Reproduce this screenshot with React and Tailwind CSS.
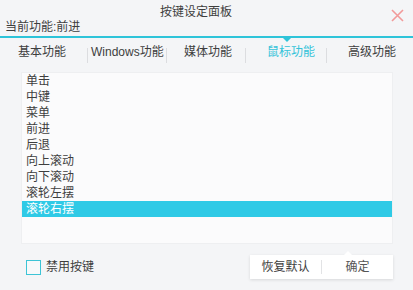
import React from 'react';

const tabs = [
    { label: '基本功能', w: 87, pl: 18 },
    { label: 'Windows功能', w: 79, pl: 4 },
    { label: '媒体功能', w: 79, pl: 18 },
    { label: '鼠标功能', w: 81, pl: 22 },
    { label: '高级功能', w: 87, pl: 22 },
];
const items = ['单击', '中键', '菜单', '前进', '后退', '向上滚动', '向下滚动', '滚轮左摆', '滚轮右摆'];

export default function App() {
    const active = 3;
    const selected = 8;

    return (
        <div
            className="w-[413px] h-[290px] bg-[#f4f5f7] text-[#3e3e3e] text-[12px] leading-none overflow-hidden"
            style={{ fontFamily: '"Liberation Sans", "Noto Sans CJK SC", sans-serif' }}
        >
            {/* Header */}
            <div className="relative h-[36px]">
                <div className="absolute left-[160px] top-[6px]">按键设定面板</div>
                <div className="absolute left-[5px] top-[21px]">当前功能:前进</div>
                <svg className="absolute left-[391px] top-[9px]" width="13" height="13" viewBox="0 0 13 13">
                    <path d="M1 1 L12 12 M12 1 L1 12" stroke="#f29a9a" strokeWidth="1.6" />
                </svg>
            </div>

            {/* Tabs */}
            <div className="relative h-[28px] border-t-2 border-[#2ec4d9] flex">
                {tabs.map((t, i) => (
                    <div key={t.label} className="relative flex items-center" style={{ width: t.w, paddingLeft: t.pl }}>
                        {i > 0 && <div className="absolute left-0 top-[10px] w-px h-[15px] bg-[#dcdde0]" />}
                        <span className={i === active ? 'text-[#35c3d9] pt-[2px]' : 'pt-[2px]'}>{t.label}</span>
                        {i === active && (
                            <div className="absolute left-[38px] top-0 w-0 h-0 border-l-[4px] border-r-[4px] border-t-[4px] border-l-transparent border-r-transparent border-t-[#2ec4d9]" />
                        )}
                    </div>
                ))}
            </div>

            {/* List */}
            <div className="ml-[21px] mt-[8px] w-[372px] h-[172px] bg-[#fbfbfc] border border-[#eeeff1]">
                {items.map((it, i) => (
                    <div
                        key={it}
                        className={`h-[16px] pl-[4px] flex items-center w-[370px] ${i === selected ? 'bg-[#2fcae6] text-white' : ''}`}
                    >
                        {it}
                    </div>
                ))}
            </div>

            {/* Footer */}
            <div className="flex items-center mt-[11px]">
                <div className="ml-[26px] flex items-center gap-[5px]">
                    <div className="w-[15px] h-[15px] border-[1.5px] border-[#3dc4d6] bg-[#f7f9fa]" />
                    <span>禁用按键</span>
                </div>
                <div className="relative ml-auto mr-[20px] w-[143px] h-[24px] bg-white shadow-[0_1px_3px_rgba(0,0,0,0.12)] flex items-center">
                    <div className="absolute left-[94px] -top-[4px] w-0 h-0 border-l-[4px] border-r-[4px] border-b-[4px] border-l-transparent border-r-transparent border-b-white" />
                    <span className="w-[71px] text-center">恢复默认</span>
                    <div className="w-px h-[14px] bg-[#e2e3e5]" />
                    <span className="flex-1 text-center text-[#555]">确定</span>
                </div>
            </div>
        </div>
    );
}
